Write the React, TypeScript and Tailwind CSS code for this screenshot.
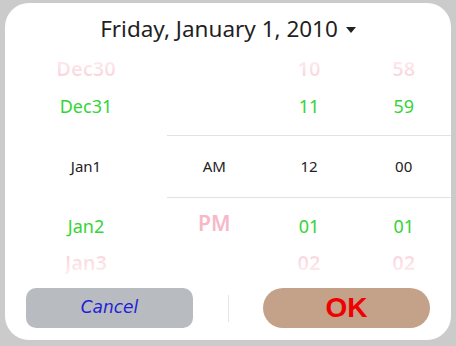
const green = "text-[#35d436]";

const FadeTop = ({ children }: { children: React.ReactNode }) => (
  <span className="bg-linear-to-b from-[#fef4f6] to-[#fad7e0] to-70% bg-clip-text text-[20px] font-semibold text-transparent">
    {children}
  </span>
);

const FadeBottom = ({ children }: { children: React.ReactNode }) => (
  <span className="bg-linear-to-b from-[#fad7e0] from-30% to-[#fef4f6] bg-clip-text text-[20px] font-semibold text-transparent">
    {children}
  </span>
);

const Cell = ({ children, className = "" }: { children?: React.ReactNode; className?: string }) => (
  <div className={`flex flex-1 items-center justify-center ${className}`}>{children}</div>
);

export default function App() {
  return (
    <div className="h-[346px] w-[456px] bg-[#cbcbcb] pt-[3px] pl-[5px]" style={{ fontFamily: "'Noto Sans', Roboto, sans-serif" }}>
      <div className="flex h-[337px] w-[446px] flex-col overflow-hidden rounded-[24px] bg-white">
        {/* header */}
        <div className="flex h-[47px] items-start justify-center pt-[15px] text-[22.5px] leading-none text-[#1f1f1f]">
          <span>Friday, January 1, 2010</span>
          <span className="mt-[9px] ml-[8px] h-0 w-0 border-x-[5px] border-t-[6px] border-x-transparent border-t-[#222]" />
        </div>

        {/* wheels */}
        <div className="flex flex-col">
          <div className="flex h-[37px]">
            <Cell className="w-[162px] flex-none"><FadeTop>Dec30</FadeTop></Cell>
            <Cell />
            <Cell><FadeTop>10</FadeTop></Cell>
            <Cell><FadeTop>58</FadeTop></Cell>
          </div>
          <div className={`flex h-[38px] text-[18px] ${green}`}>
            <Cell className="w-[162px] flex-none">Dec31</Cell>
            <Cell />
            <Cell>11</Cell>
            <Cell>59</Cell>
          </div>
          <div className="h-[10px]" />
          <div className="flex h-[63px] text-[15px] text-[#222]">
            <Cell className="w-[162px] flex-none">Jan1</Cell>
            <div className="flex flex-1 border-y border-[#e2e2e2]">
              <Cell>AM</Cell>
              <Cell>12</Cell>
              <Cell>00</Cell>
            </div>
          </div>
          <div className={`flex h-[56px] text-[18px] ${green}`}>
            <Cell className="w-[162px] flex-none">Jan2</Cell>
            <Cell className="pb-[4px] text-[21px] font-semibold text-[#f7b8c8]">PM</Cell>
            <Cell>01</Cell>
            <Cell>01</Cell>
          </div>
          <div className="flex h-[18px]">
            <Cell className="w-[162px] flex-none"><FadeBottom>Jan3</FadeBottom></Cell>
            <Cell />
            <Cell><FadeBottom>02</FadeBottom></Cell>
            <Cell><FadeBottom>02</FadeBottom></Cell>
          </div>
        </div>

        {/* buttons */}
        <div className="mt-[16px] flex items-center px-[21px]">
          <button
            className="flex h-[40px] w-[167px] items-center justify-center rounded-[10px] bg-[#b8bbc0] text-[17px] text-[#1f1fd6] italic"
            style={{ fontFamily: "'DejaVu Sans', sans-serif" }}
          >
            Cancel
          </button>
          <div className="mx-auto h-[27px] w-px bg-[#e4e4e4]" />
          <button
            className="flex h-[40px] w-[167px] items-center justify-center rounded-full bg-[#c4a189] text-[28px] font-bold text-[#f00000]"
            style={{ fontFamily: "'Liberation Sans', Arial, sans-serif" }}
          >
            OK
          </button>
        </div>
      </div>
    </div>
  );
}
